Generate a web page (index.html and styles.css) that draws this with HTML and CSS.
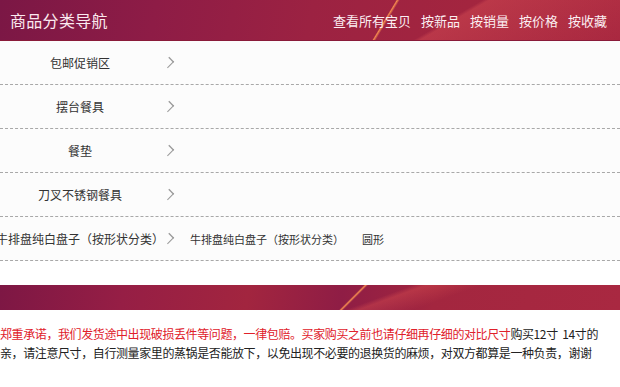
FILE: index.html
```html
<!DOCTYPE html>
<html lang="zh-CN">
  <head>
    <meta charset="UTF-8" />
    <title>商品分类导航</title>
    <link rel="stylesheet" href="styles.css">
  </head>
  <body>
    <!-- Top bar -->
    <header class="topbar">
      <span class="topbar-title">商品分类导航</span>
      <nav class="topbar-links">
        <a href="#">查看所有宝贝</a>
        <a href="#">按新品</a>
        <a href="#">按销量</a>
        <a href="#">按价格</a>
        <a href="#">按收藏</a>
      </nav>
    </header>

    <!-- Category list -->
    <ul class="cats">
      <li class="cat-row">
        <span class="cat-name">包邮促销区</span>
        <span class="chev"></span>
      </li>
      <li class="cat-row">
        <span class="cat-name">摆台餐具</span>
        <span class="chev"></span>
      </li>
      <li class="cat-row">
        <span class="cat-name">餐垫</span>
        <span class="chev"></span>
      </li>
      <li class="cat-row">
        <span class="cat-name">刀叉不锈钢餐具</span>
        <span class="chev"></span>
      </li>
      <li class="cat-row">
        <span class="cat-name">牛排盘纯白盘子（按形状分类）</span>
        <span class="chev"></span>
        <span class="sub">牛排盘纯白盘子（按形状分类）</span>
        <span class="sub">圆形</span>
      </li>
    </ul>

    <div class="band"></div>

    <p class="notice">
      <span class="red">郑重承诺，我们发货途中出现破损丢件等问题，一律包赔。买家购买之前也请仔细再仔细的对比尺寸</span>购买12寸&nbsp;&nbsp;14寸的<br>亲，请注意尺寸，自行测量家里的蒸锅是否能放下，以免出现不必要的退换货的麻烦，对双方都算是一种负责，谢谢
    </p>
  </body>
</html>
```

FILE: styles.css
```css
/* Page */
body {
  margin: 0;
  padding: 0;
  background-color: #fff;
  font-family: "Noto Sans CJK SC", "Noto Sans", sans-serif;
  overflow: hidden;
}

/* Top bar */
.topbar {
  height: 40px;
  display: flex;
  align-items: center;
  justify-content: space-between;
  padding: 0 13px 0 10px;
  background:
    linear-gradient(121deg, transparent 0, transparent 61.5%, rgba(255, 150, 80, 0.9) 61.7%, transparent 62.1%),
    linear-gradient(150deg, transparent 70%, rgba(230, 90, 90, 0.35) 71%, transparent 100%),
    linear-gradient(100deg, #7b1745 0%, #8e1c46 25%, #9c2242 50%, #a3253f 75%, #a92840 100%);
  border-bottom: 1px solid #8a1b3a;
}

.topbar-title {
  color: #fbe9ef;
  font-size: 16px;
  letter-spacing: 0.3px;
}

.topbar-links {
  display: flex;
  gap: 10px;
}

.topbar-links a {
  color: #fbeef2;
  text-decoration: none;
  font-size: 13px;
}

/* Category rows */
.cats {
  list-style: none;
  margin: 0;
  padding: 0;
  background-color: #fcfcfc;
}

.cat-row {
  height: 43px;
  display: flex;
  align-items: center;
  border-bottom: 1px dashed #a8a8a8;
  white-space: nowrap;
}

.cat-name {
  width: 160px;
  flex-shrink: 0;
  display: flex;
  justify-content: center;
  font-size: 12px;
  color: #333;
}

.chev {
  width: 6px;
  height: 6px;
  margin: 0 18px 0 5px;
  border-top: 1px solid #999;
  border-right: 1px solid #999;
  transform: rotate(45deg) scale(1, 1.3);
}

.sub {
  font-size: 11px;
  color: #333;
  margin-right: 18px;
}

/* Second band */
.band {
  height: 25px;
  margin-top: 24px;
  background:
    linear-gradient(135deg, transparent 0, transparent 56.4%, rgba(255, 150, 80, 0.9) 56.7%, transparent 57.1%),
    linear-gradient(160deg, transparent 60%, rgba(220, 80, 80, 0.4) 62%, transparent 70%),
    linear-gradient(100deg, #7d1744 0%, #961e45 20%, #a2253f 40%, #8f1d45 55%, #a3263f 70%, #a92841 100%);
}

/* Notice text */
.notice {
  margin: 14px 0 0 0;
  font-size: 12px;
  line-height: 19px;
  letter-spacing: -0.4px;
  white-space: nowrap;
  color: #222;
}

.red {
  color: #e0202a;
}
```
